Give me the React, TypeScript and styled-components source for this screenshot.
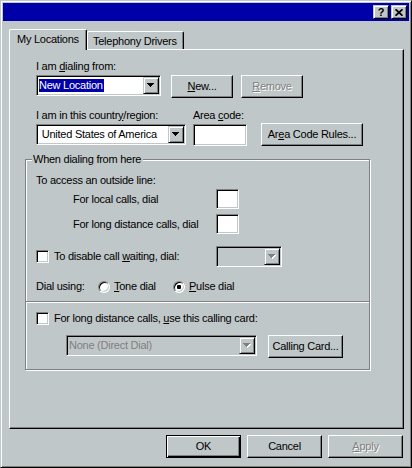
import React from 'react';
import styled, { createGlobalStyle } from 'styled-components';

const FACE = '#c0c7c8';
const SHADOW = '#808080';
const NAVY = '#0000a8';

const Global = createGlobalStyle`
  html, body { margin: 0; padding: 0; background: ${FACE}; }
  body {
    font-family: "Liberation Sans", Arial, sans-serif;
    font-size: 11px;
    line-height: 13px;
    letter-spacing: -0.25px;
    color: #000;
  }
  * { box-sizing: border-box; }
  u { text-decoration: underline; text-underline-offset: 1px; }
`;

const Window = styled.div`
  width: 412px;
  height: 468px;
  background: ${FACE};
  border: 1px solid;
  border-color: ${FACE} #000 #000 ${FACE};
  box-shadow: inset 1px 1px #fff, inset -1px -1px ${SHADOW};
  padding: 2px;
  display: flex;
  flex-direction: column;
`;

const TitleBar = styled.div`
  height: 18px;
  background: ${NAVY};
  display: flex;
  justify-content: flex-end;
  align-items: center;
  gap: 2px;
  padding-right: 2px;
`;

const CaptionButton = styled.div`
  width: 16px;
  height: 14px;
  background: ${FACE};
  border: 1px solid;
  border-color: ${FACE} #000 #000 ${FACE};
  box-shadow: inset 1px 1px #fff, inset -1px -1px ${SHADOW};
  display: flex;
  align-items: center;
  justify-content: center;
  font-weight: bold;
  font-size: 11px;
  line-height: 12px;
  letter-spacing: 0;
`;

const TabStrip = styled.div`
  margin-top: 8px;
  height: 20px;
  padding-left: 6px;
  display: flex;
  align-items: flex-end;
`;

const Tab = styled.div<{ $active?: boolean; $w: number }>`
  position: relative;
  z-index: ${p => (p.$active ? 1 : 0)};
  width: ${p => p.$w}px;
  height: ${p => (p.$active ? 21 : 18)}px;
  margin-bottom: ${p => (p.$active ? -1 : 0)}px;
  background: ${FACE};
  border-top: 1px solid #fff;
  border-left: 1px solid #fff;
  border-right: 1px solid #000;
  border-radius: 2px 2px 0 0;
  box-shadow: inset -1px 0 ${SHADOW};
  padding: 3px 0 0 ${p => (p.$active ? 7 : 5)}px;
  white-space: nowrap;
`;

const Panel = styled.div`
  margin-left: 6px;
  width: 395px;
  height: 380px;
  border-top: 1px solid #fff;
  border-left: 1px solid #fff;
  border-right: 1px solid #000;
  border-bottom: 1px solid #000;
  box-shadow: inset -1px -1px ${SHADOW};
  padding: 10px 0 0 15px;
  display: flex;
  flex-direction: column;
`;

const TopSection = styled.div`
  padding-left: 11px;
  display: flex;
  flex-direction: column;
`;

const Label = styled.div<{ $mt?: number; $w?: number }>`
  height: 13px;
  white-space: nowrap;
  margin-top: ${p => p.$mt ?? 0}px;
  ${p => (p.$w ? `width: ${p.$w}px;` : '')}
`;

const Row = styled.div<{ $mt?: number; $ml?: number }>`
  display: flex;
  align-items: flex-start;
  margin-top: ${p => p.$mt ?? 0}px;
  margin-left: ${p => p.$ml ?? 0}px;
`;

const Field = styled.div<{ $ml?: number }>`
  display: flex;
  flex-direction: column;
  gap: 2px;
  margin-left: ${p => p.$ml ?? 0}px;
`;

const Sunken = styled.div<{ $w: number; $h: number; $disabled?: boolean }>`
  width: ${p => p.$w}px;
  height: ${p => p.$h}px;
  flex: none;
  background: ${p => (p.$disabled ? FACE : '#fff')};
  border: 1px solid;
  border-color: ${SHADOW} #fff #fff ${SHADOW};
  box-shadow: inset 1px 1px #000, inset -1px -1px ${FACE};
  padding: 1px;
  display: flex;
  align-items: stretch;
`;

const ComboText = styled.div<{ $disabled?: boolean }>`
  flex: 1;
  display: flex;
  align-items: center;
  padding-left: 1px;
  white-space: nowrap;
  overflow: hidden;
  color: ${p => (p.$disabled ? SHADOW : '#000')};
`;

const Selected = styled.span`
  background: ${NAVY};
  color: #fff;
  padding: 0 1px 0 0;
  line-height: 13px;
`;

const DropButton = styled.div`
  width: 16px;
  flex: none;
  background: ${FACE};
  border: 1px solid;
  border-color: ${FACE} #000 #000 ${FACE};
  box-shadow: inset 1px 1px #fff, inset -1px -1px ${SHADOW};
  display: flex;
  align-items: center;
  justify-content: center;
`;

const ARROW = 'M0 0h7v1h-1v1h-1v1h-1v1h-1v-1h-1v-1h-1v-1h-1z';

const Arrow = ({ disabled }: { disabled?: boolean }) => (
  <svg width="8" height="5" viewBox="0 0 8 5" style={{ display: 'block' }}>
    {disabled && <path d={ARROW} transform="translate(1 1)" fill="#fff" />}
    <path d={ARROW} fill={disabled ? SHADOW : '#000'} />
  </svg>
);

const Combo = ({ w, disabled, children }: { w: number; disabled?: boolean; children?: React.ReactNode }) => (
  <Sunken $w={w} $h={21} $disabled={disabled}>
    <ComboText $disabled={disabled}>{children}</ComboText>
    <DropButton>
      <Arrow disabled={disabled} />
    </DropButton>
  </Sunken>
);

const Button = styled.button<{ $w: number; $ml?: number; $default?: boolean }>`
  width: ${p => p.$w}px;
  height: 23px;
  flex: none;
  margin: 0 0 0 ${p => p.$ml ?? 0}px;
  padding: 0;
  font: inherit;
  letter-spacing: inherit;
  color: #000;
  background: ${FACE};
  border: 1px solid;
  border-color: ${p => (p.$default ? '#000' : '#fff #000 #000 #fff')};
  box-shadow: ${p =>
    p.$default
      ? `inset 1px 1px #fff, inset -1px -1px #000, inset -2px -2px ${SHADOW}`
      : `inset -1px -1px ${SHADOW}`};
  &:disabled {
    color: ${SHADOW};
    text-shadow: 1px 1px 0 #fff;
  }
`;

const GroupBox = styled.div`
  margin-top: 13px;
  width: 345px;
  border: 1px solid ${SHADOW};
  box-shadow: inset 1px 1px #fff, 1px 1px #fff;
  display: flex;
  flex-direction: column;
`;

const Legend = styled.div`
  align-self: flex-start;
  height: 13px;
  margin: -7px 0 0 6px;
  padding: 0 2px 0 1px;
  background: ${FACE};
  white-space: nowrap;
`;

const Section = styled.div<{ $pb: number }>`
  padding: 0 10px ${p => p.$pb}px 10px;
  display: flex;
  flex-direction: column;
`;

const Divider = styled.div`
  height: 2px;
  border-top: 1px solid ${SHADOW};
  border-bottom: 1px solid #fff;
`;

const DialRow = styled.div<{ $mt: number }>`
  display: grid;
  grid-template-columns: 143px 23px;
  align-items: center;
  margin: ${p => p.$mt}px 0 0 37px;
`;

const OptionRow = styled.div<{ $mt: number }>`
  display: grid;
  grid-template-columns: 180px auto;
  align-items: center;
  margin-top: ${p => p.$mt}px;
`;

const CheckLine = styled.div<{ $mt?: number }>`
  display: flex;
  align-items: center;
  gap: 5px;
  height: 13px;
  margin-top: ${p => p.$mt ?? 0}px;
  white-space: nowrap;
`;

const CheckBox = styled.span`
  width: 13px;
  height: 13px;
  flex: none;
  background: #fff;
  border: 1px solid;
  border-color: ${SHADOW} #fff #fff ${SHADOW};
  box-shadow: inset 1px 1px #000, inset -1px -1px ${FACE};
`;

const RadioRow = styled.div`
  display: flex;
  align-items: center;
  height: 13px;
  margin-top: 13px;
  white-space: nowrap;
`;

const RadioOption = styled.div<{ $w?: number }>`
  display: flex;
  align-items: center;
  gap: 4px;
  ${p => (p.$w ? `width: ${p.$w}px;` : '')}
`;

const Radio = styled.span<{ $checked?: boolean }>`
  width: 12px;
  height: 12px;
  flex: none;
  border-radius: 50%;
  background: #fff;
  border: 1px solid;
  border-color: ${SHADOW} #fff #fff ${SHADOW};
  box-shadow: inset 1px 1px #000, inset -1px -1px ${FACE};
  display: flex;
  align-items: center;
  justify-content: center;
  &::after {
    content: '';
    width: 4px;
    height: 4px;
    border-radius: 1px;
    background: ${p => (p.$checked ? '#000' : 'transparent')};
  }
`;

const Footer = styled.div`
  margin-top: 6px;
  padding-right: 6px;
  display: flex;
  justify-content: flex-end;
  gap: 6px;
`;

export default function App() {
  return (
    <>
      <Global />
      <Window>
        <TitleBar>
          <CaptionButton>?</CaptionButton>
          <CaptionButton>
            <svg width="8" height="7" viewBox="0 0 8 7" style={{ display: 'block' }}>
              <path d="M0.5 0.3 L7.5 6.7 M7.5 0.3 L0.5 6.7" stroke="#000" strokeWidth="1.8" />
            </svg>
          </CaptionButton>
        </TitleBar>

        <TabStrip>
          <Tab $active $w={78}>My Locations</Tab>
          <Tab $w={97}>Telephony Drivers</Tab>
        </TabStrip>

        <Panel>
          <TopSection>
            <Label>I am <u>d</u>ialing from:</Label>
            <Row $mt={2}>
              <Combo w={125}>
                <Selected>New Location</Selected>
              </Combo>
              <Button $w={62} $ml={10}><u>N</u>ew...</Button>
              <Button $w={62} $ml={8} disabled><u>R</u>emove</Button>
            </Row>
            <Row $mt={11}>
              <Field>
                <Label>I am in this countr<u>y</u>/region:</Label>
                <Combo w={150}>&nbsp;United States of America</Combo>
              </Field>
              <Field $ml={7}>
                <Label>Area <u>c</u>ode:</Label>
                <Sunken $w={54} $h={22} />
              </Field>
              <Button $w={102} $ml={14} style={{ alignSelf: 'flex-end' }}>
                Ar<u>e</u>a Code Rules...
              </Button>
            </Row>
          </TopSection>

          <GroupBox>
            <Legend>When dialing from here</Legend>
            <Section $pb={8}>
              <Label $mt={8}>To access an outside line:</Label>
              <DialRow $mt={2}>
                <span>For local calls, dial</span>
                <Sunken $w={23} $h={20} />
              </DialRow>
              <DialRow $mt={5}>
                <span>For long distance calls, dial</span>
                <Sunken $w={23} $h={20} />
              </DialRow>
              <OptionRow $mt={12}>
                <CheckLine>
                  <CheckBox />
                  <span>To disable call <u>w</u>aiting, dial:</span>
                </CheckLine>
                <Combo w={66} disabled />
              </OptionRow>
              <RadioRow>
                <Label $w={62}>Dial using:</Label>
                <RadioOption $w={75}>
                  <Radio />
                  <span><u>T</u>one dial</span>
                </RadioOption>
                <RadioOption>
                  <Radio $checked />
                  <span><u>P</u>ulse dial</span>
                </RadioOption>
              </RadioRow>
            </Section>
            <Divider />
            <Section $pb={11}>
              <CheckLine $mt={9}>
                <CheckBox />
                <span>For long distance calls, <u>u</u>se this calling card:</span>
              </CheckLine>
              <Row $mt={10} $ml={30}>
                <Combo w={191} disabled>None (Direct Dial)</Combo>
                <Button $w={75} $ml={11}>Calling Card...</Button>
              </Row>
            </Section>
          </GroupBox>
        </Panel>

        <Footer>
          <Button $w={75} $default>OK</Button>
          <Button $w={75}>Cancel</Button>
          <Button $w={75} disabled><u>A</u>pply</Button>
        </Footer>
      </Window>
    </>
  );
}
